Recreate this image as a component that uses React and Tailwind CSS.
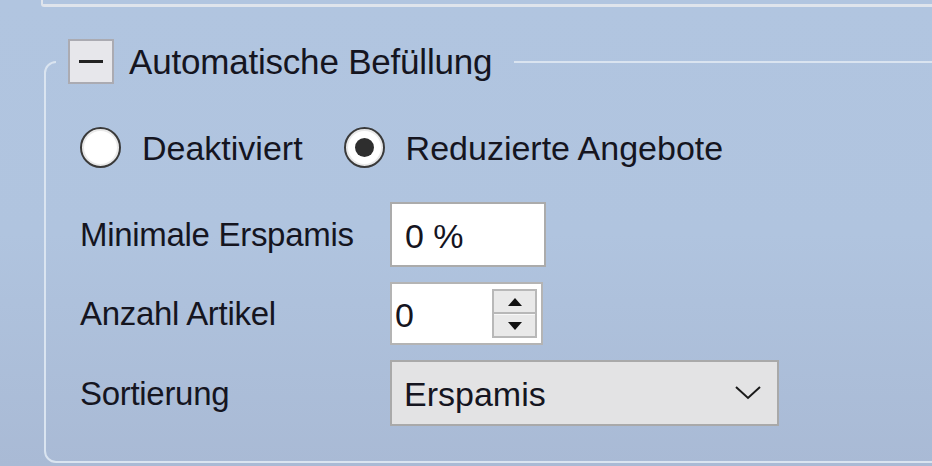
import React from "react";

function Radio({ checked, label }) {
  return (
    <div className="flex items-center gap-[21px]">
      <div className="w-[41px] h-[41px] rounded-full border-2 border-[#3a3a3a] bg-white flex items-center justify-center shadow-[inset_0_0_0_2px_#e9e9e9]">
        {checked && <div className="w-[19px] h-[19px] rounded-full bg-[#2e2e2e]" />}
      </div>
      <span>{label}</span>
    </div>
  );
}

export default function App() {
  return (
    <div className="w-[932px] h-[466px] overflow-hidden bg-gradient-to-b from-[#b1c5e0] via-[#b0c4df] to-[#a9bad5] text-[#15151f] font-['Liberation_Sans',Arial,sans-serif] text-[34px] leading-none">
      {/* bottom edge of the group above */}
      <div className="ml-[41px] h-[7px] border-l-2 border-b-[3px] border-[#dfe4ec] rounded-bl-[3px]" />

      <fieldset className="mt-[32px] ml-[44px] w-[920px] h-[424px] border-2 border-[#dae4f0] rounded-l-[12px]">
        <legend className="ml-[10px] pl-[12px] pr-[22px] flex items-center gap-[15px]">
          <div className="w-[46px] h-[45px] bg-[#e7e7eb] border-2 border-[#ababb2] flex items-center justify-center">
            <div className="w-[24px] h-[3px] bg-[#222]" />
          </div>
          <span className="text-[35px] tracking-[-0.2px]">Automatische Befüllung</span>
        </legend>

        <div className="pl-[34px]">
          <div className="mt-[43px] flex items-center gap-[41px]">
            <Radio label="Deaktiviert" />
            <Radio checked label="Reduzierte Angebote" />
          </div>

          <div className="mt-[34px] grid grid-cols-[310px_auto] gap-y-[15px] items-center justify-start">
            <span className="text-[33px] tracking-[-0.3px]">Minimale Erspamis</span>
            <div className="w-[156px] h-[65px] bg-white border-2 border-[#ababab] flex items-center pl-[13px]">
              <span className="mt-[2px]">0 %</span>
            </div>

            <span className="text-[33px] tracking-[-0.3px]">Anzahl Artikel</span>
            <div className="w-[153px] h-[63px] bg-white border-2 border-[#b4b4b4] flex items-center">
              <span className="flex-1 pl-[3px] mt-[2px]">0</span>
              <div className="w-[45px] h-[49px] mr-[4px] border-2 border-[#b8b8b8] bg-[#e9e9e9] flex flex-col">
                <div className="flex-1 flex items-center justify-center border-b-2 border-[#b8b8b8]">
                  <svg width="14" height="8" viewBox="0 0 14 8">
                    <path d="M0 8 L7 0 L14 8 Z" fill="#111" />
                  </svg>
                </div>
                <div className="flex-1 flex items-center justify-center border-t border-[#f8f8f8]">
                  <svg width="14" height="8" viewBox="0 0 14 8">
                    <path d="M0 0 L14 0 L7 8 Z" fill="#111" />
                  </svg>
                </div>
              </div>
            </div>

            <span className="text-[33px] tracking-[-0.3px]">Sortierung</span>
            <div className="w-[389px] h-[66px] bg-[#e3e3e4] border-2 border-[#a9a9a9] flex items-center pl-[12px] pr-[16px]">
              <span className="flex-1 mt-[2px]">Erspamis</span>
              <svg width="26" height="14" viewBox="0 0 26 14">
                <path d="M1 1 L13 12 L25 1" fill="none" stroke="#1a1a1a" strokeWidth="2" />
              </svg>
            </div>
          </div>
        </div>
      </fieldset>
    </div>
  );
}
